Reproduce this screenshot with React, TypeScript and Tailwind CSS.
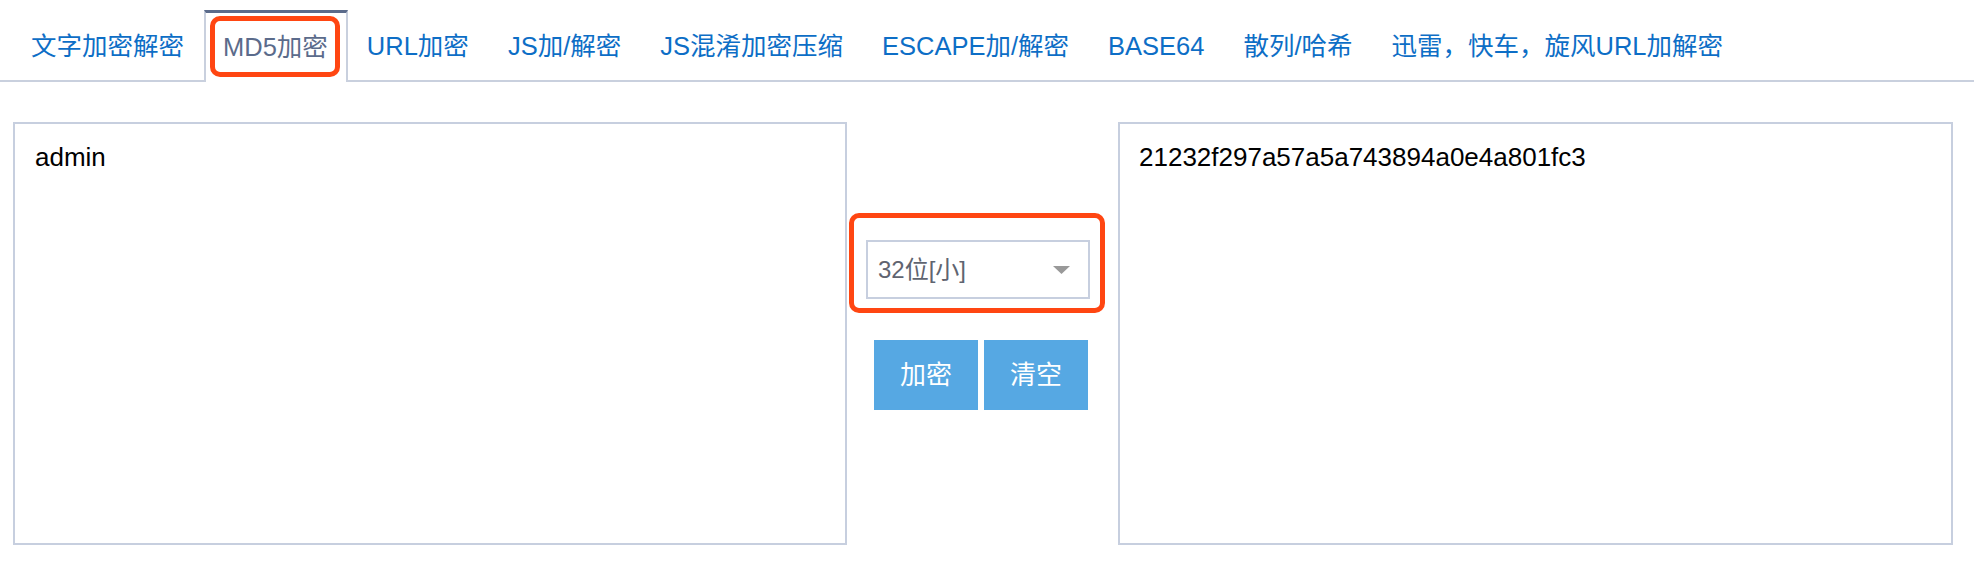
import { useState } from 'react';

const TABS = [
  '文字加密解密',
  'MD5加密',
  'URL加密',
  'JS加/解密',
  'JS混淆加密压缩',
  'ESCAPE加/解密',
  'BASE64',
  '散列/哈希',
  '迅雷，快车，旋风URL加解密',
];

const FONT = "font-['Liberation_Sans','Noto_Sans_CJK_SC',sans-serif]";

export default function App() {
  const [active] = useState(1);
  const [input, setInput] = useState('admin');
  const [output, setOutput] = useState('21232f297a57a5a743894a0e4a801fc3');

  return (
    <div className={`min-h-screen bg-white ${FONT}`}>
      {/* Tabs */}
      <div className="flex h-[82px] items-end border-b-2 border-[#c9d0de] pl-[12px]">
        {TABS.map((t, i) =>
          i === active ? (
            <div
              key={t}
              className="relative -mb-[2px] flex h-[72px] items-center border-x-2 border-t-[3px] border-x-[#c9d0de] border-t-[#5b6b8b] bg-white pl-[17px] pr-[18px] text-[25.5px] text-[#5b6b8b]"
            >
              {t}
              {/* highlight */}
              <span className="pointer-events-none absolute bottom-[5px] left-[4px] right-[6px] top-[3px] rounded-[10px] border-[5px] border-[#ff4612]" />
            </div>
          ) : (
            <div
              key={t}
              className="-mb-[2px] flex h-[72px] cursor-pointer items-center border-x-2 border-transparent pl-[17px] pr-[18px] text-[25.5px] text-[#0d6ec6]"
            >
              {t}
            </div>
          ),
        )}
      </div>

      {/* Body */}
      <div className="flex pl-[13px] pt-[40px]">
        <textarea
          value={input}
          onChange={(e) => setInput(e.target.value)}
          className="h-[423px] w-[834px] resize-none border-2 border-[#c7cfdf] px-[20px] pt-[14px] text-[26px] leading-[39px] text-black outline-none"
        />

        <div className="flex w-[271px] flex-col pl-[19px] pt-[118px]">
          <div className="relative h-[59px] w-[224px]">
            <div className="flex h-full w-full items-center justify-between border-2 border-[#c7cfdf] pl-[10px] pr-[18px] text-[24px] text-[#5f6470]">
              <span>32位[小]</span>
              <svg width="17" height="8" viewBox="0 0 17 8">
                <path d="M0 0h17L8.5 8z" fill="#999999" />
              </svg>
            </div>
            <span className="pointer-events-none absolute -bottom-[14px] -left-[17px] -right-[15px] -top-[27px] rounded-[10px] border-[5px] border-[#ff4612]" />
          </div>

          <div className="mt-[41px] flex gap-[6px] pl-[8px]">
            <button
              type="button"
              className="flex h-[70px] w-[104px] items-center justify-center bg-[#56a8e3] text-[26px] text-white"
            >
              加密
            </button>
            <button
              type="button"
              onClick={() => {
                setInput('');
                setOutput('');
              }}
              className="flex h-[70px] w-[104px] items-center justify-center bg-[#56a8e3] text-[26px] text-white"
            >
              清空
            </button>
          </div>
        </div>

        <textarea
          value={output}
          readOnly
          className="h-[423px] w-[835px] resize-none border-2 border-[#c7cfdf] px-[19px] pt-[14px] text-[26px] leading-[39px] text-black outline-none"
        />
      </div>
    </div>
  );
}
